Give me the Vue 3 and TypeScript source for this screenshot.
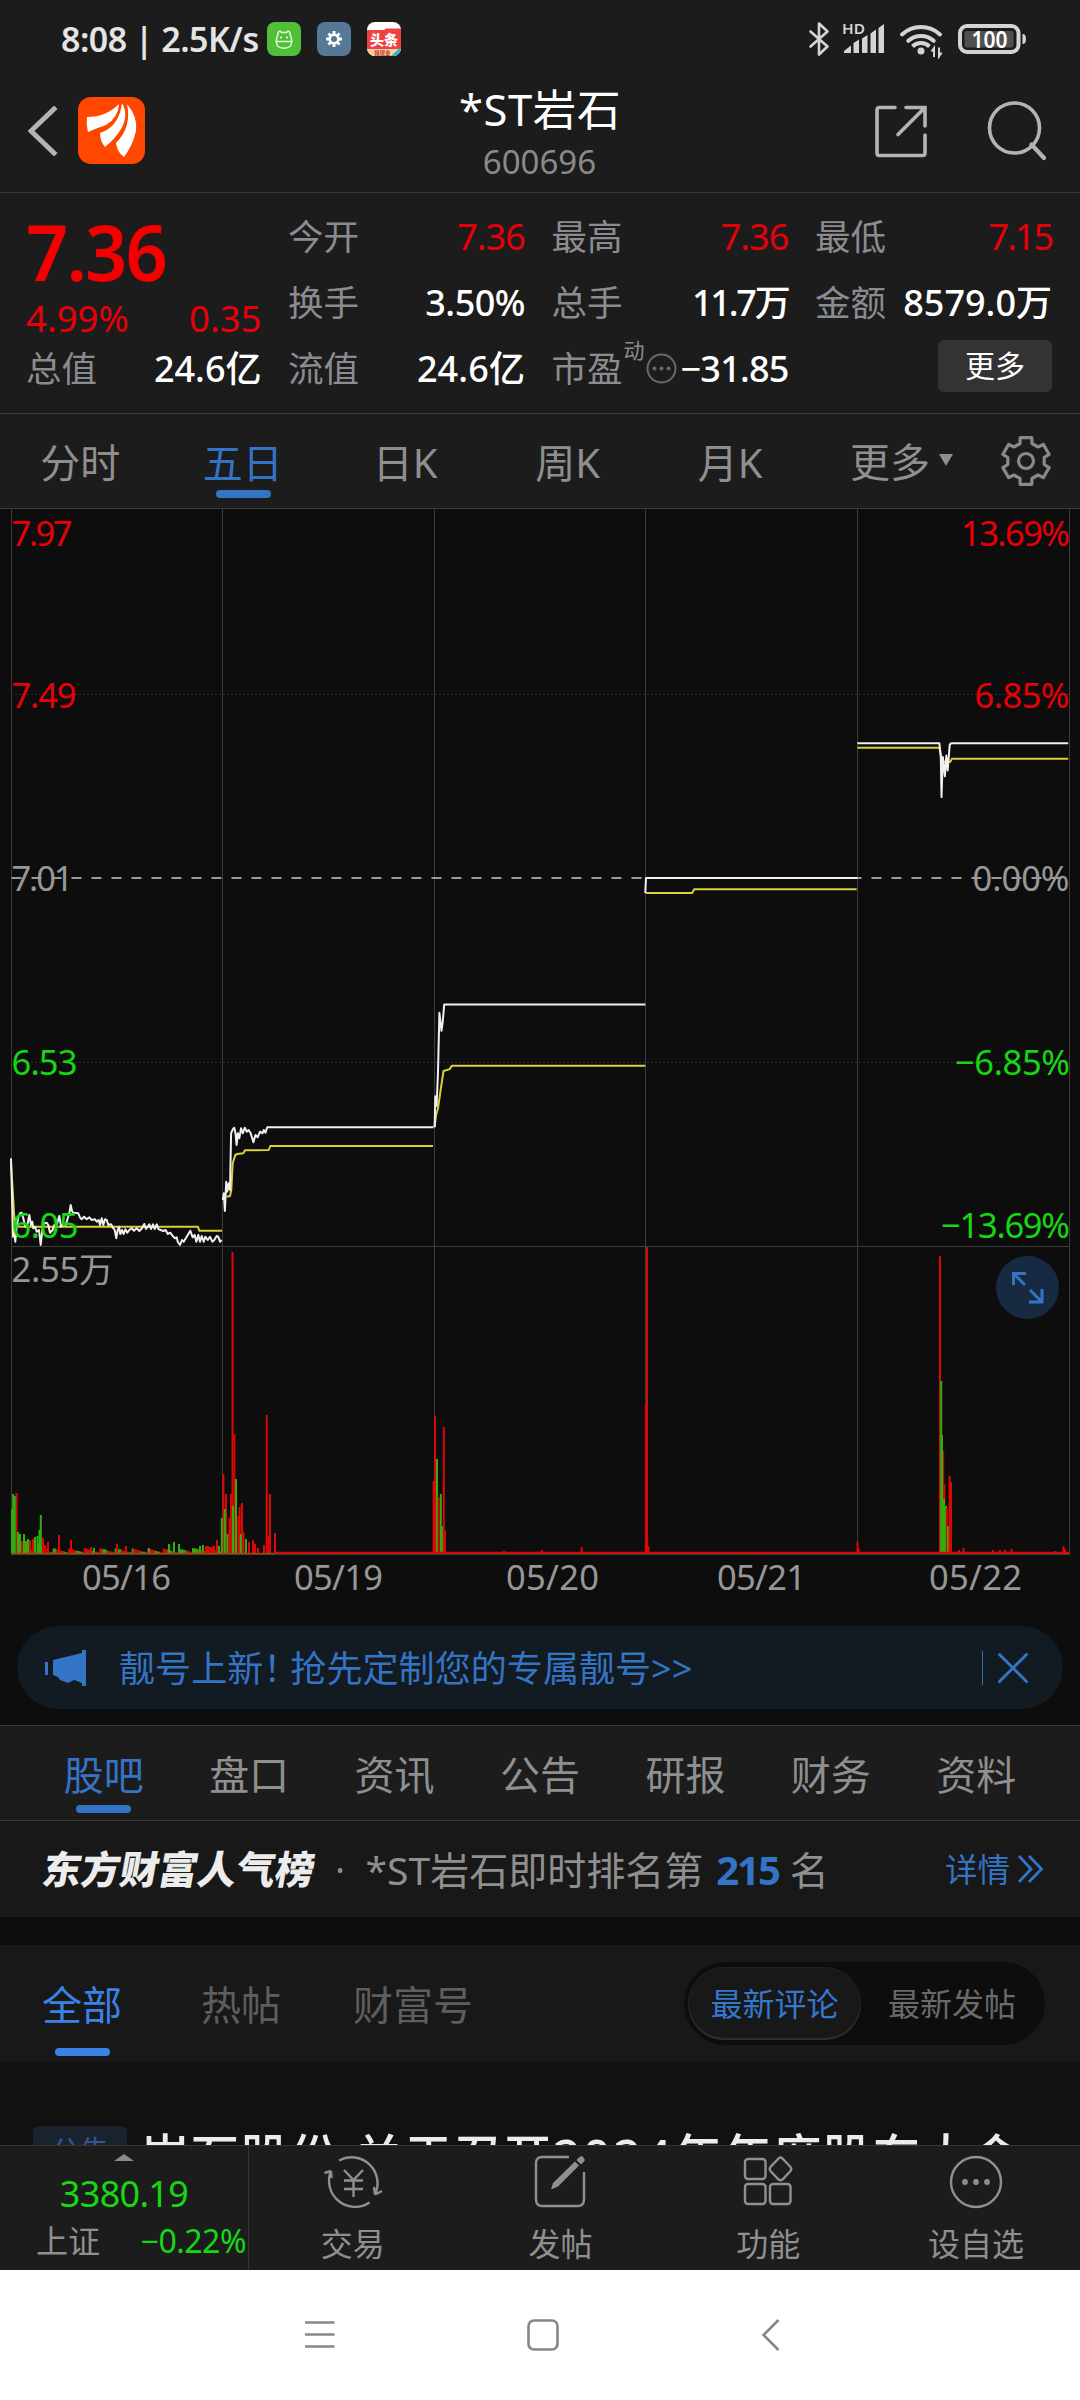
<script setup lang="ts">
interface Cell { label: string; value: string; tone?: 'up' | 'plain'; tracking?: number }
interface Segment { sx: number; sy: number; oy: number; samples: number[] }
type Bar = [x: number, height: number, tone: 'r' | 'g']

const columns: Cell[][] = [
  [
    { label: '今开', value: '7.36', tone: 'up', tracking: -0.9 },
    { label: '换手', value: '3.50%', tracking: -0.5 },
    { label: '流值', value: '24.6亿', tracking: 0.1 },
  ],
  [
    { label: '最高', value: '7.36', tone: 'up', tracking: -0.9 },
    { label: '总手', value: '11.7万', tracking: -2.2 },
    { label: '市盈', value: '−31.85', tracking: -0.8 },
  ],
  [
    { label: '最低', value: '7.15', tone: 'up', tracking: -2 },
    { label: '金额', value: '8579.0万', tracking: 0 },
  ],
]

const periods = ['分时', '五日', '日K', '周K', '月K']
const sections = ['股吧', '盘口', '资讯', '公告', '研报', '财务', '资料']

// Six-tooth gear outline
const gear = (() => {
  const out: string[] = []
  for (let k = 0; k < 6; k++) {
    const base = k * 60 - 90
    for (const [offset, r] of [[-19, 18.5], [-14, 24], [14, 24], [19, 18.5]]) {
      const a = ((base + offset) * Math.PI) / 180
      out.push(`${(26 + r * Math.cos(a)).toFixed(1)},${(26 + r * Math.sin(a)).toFixed(1)}`)
    }
  }
  return out.join(' ')
})()

const cog = (() => {
  const out: string[] = []
  for (let k = 0; k < 8; k++) {
    const base = k * 45
    for (const [offset, r] of [[-14, 5.6], [-11, 8], [11, 8], [14, 5.6]]) {
      const a = ((base + offset) * Math.PI) / 180
      out.push(`${(17 + r * Math.cos(a)).toFixed(1)},${(17 + r * Math.sin(a)).toFixed(1)}`)
    }
  }
  return out.join(' ')
})()

const line = ({ sx, sy, oy, samples }: Segment): string => {
  const out: string[] = []
  for (let i = 0; i < samples.length; i += 2) {
    out.push(`${(samples[i] / sx).toFixed(1)},${(oy + samples[i + 1] / sy).toFixed(1)}`)
  }
  return out.join(' ')
}

const priceLines = [
  { sx: 3, sy: 3, oy: 1130, samples: [33,85,36,200,39,320,42,300,46,335,50,290,55,262,60,250,65,248,70,265,76,290,82,285,88,255,93,285,97,275,100,295,105,290,110,305,117,300,122,345,128,290,133,280,140,278,145,285,150,308,158,300,163,285,170,285,178,258,183,290,190,280,197,285,203,265,208,250,212,225,216,243,220,248,235,250,240,262,245,268,252,260,260,268,268,262,275,270,285,268,290,275,296,270,300,285,305,265,310,285,315,268,320,270,325,285,333,283,338,292,344,300,349,325,353,300,357,290,361,312,366,300,371,312,376,298,382,308,388,300,395,295,402,302,410,295,418,303,426,295,433,282,438,297,443,290,448,283,453,297,459,283,464,297,470,283,475,297,482,300,490,303,497,300,503,312,511,308,518,318,525,325,530,322,533,335,540,345,546,330,551,335,560,320,571,302,578,322,584,315,589,335,595,315,600,335,605,318,611,335,616,320,623,330,630,320,637,335,643,330,650,318,655,320,660,335,665,330] },
  { sx: 2.904, sy: 3, oy: 1100, samples: [647,300,650,280,653,333,657,245,660,275,664,250,668,270,671,100,675,90,680,83,684,100,687,135,691,100,695,115,700,85,705,100,711,83,717,95,722,90,728,100,736,127,742,105,748,112,755,95,762,100,766,90,771,98,776,82,1259,82] },
  { sx: 1.452, sy: 2.063, oy: 500, samples: [631,1294,632,1230,634,1250,636,1180,638,1058,641,1095,643,1075,645,1041,937,1041] },
  { sx: 1.452, sy: 2.063, oy: 500, samples: [937,811,938,780,1245,780] },
  { sx: 1.452, sy: 2.063, oy: 500, samples: [1245,502,1364,502,1366,530,1367,613,1369,530,1372,570,1374,527,1376,558,1379,505,1381,502,1551,502] },
].map(line)

const averageLines = [
  { sx: 3, sy: 3, oy: 1130, samples: [33,100,38,180,42,250,46,285,60,290,594,290,598,302,666,302] },
  { sx: 3, sy: 3, oy: 1130, samples: [680,200,690,198,694,180,698,100,706,75,712,72,730,70,735,61,806,60,811,48,1299,48] },
  { sx: 1.452, sy: 2.063, oy: 500, samples: [631,1294,633,1270,636,1255,640,1215,644,1178,653,1174,656,1167,937,1167] },
  { sx: 1.452, sy: 2.063, oy: 500, samples: [938,811,1005,811,1008,803,1244,803] },
  { sx: 1.452, sy: 2.063, oy: 500, samples: [1245,511,1364,511,1368,540,1380,540,1382,534,1551,534] },
].map(line)

const spikes: Bar[] = [
  [12, 45, 'g'], [16.5, 61, 'r'], [13.2, 60, 'g'], [14.8, 58, 'g'], [18, 22, 'g'], [20, 20, 'g'], [22, 13, 'r'], [24, 20, 'g'], [26, 13, 'g'], [28, 15, 'g'],
  [30, 14, 'r'], [33, 15, 'r'], [35, 17, 'g'], [37.5, 18, 'g'], [39.5, 24, 'g'], [40.8, 39, 'g'], [43, 16, 'r'], [45, 9, 'r'], [48, 12, 'r'], [59, 19, 'r'], [71, 14, 'r'],
  [91, 7, 'r'], [94, 6, 'g'], [117, 10, 'r'], [126, 8, 'r'], [149, 6, 'g'], [169, 10, 'g'], [174, 12, 'g'], [179, 10, 'g'], [193, 6, 'g'], [200, 8, 'g'], [203, 9, 'g'],
  [206, 8, 'r'], [208, 8, 'r'], [210, 7, 'r'], [212, 7, 'r'], [214, 8, 'r'], [217, 14, 'r'], [219, 8, 'g'],
  [223.4, 80, 'r'], [226, 60, 'r'], [221.8, 36, 'g'], [224.8, 45, 'g'], [227.6, 20, 'g'], [229.5, 36, 'r'], [231, 60, 'r'], [232.5, 302, 'r'], [234.4, 120, 'r'], [236, 75, 'g'],
  [233, 48, 'g'], [238.3, 38, 'r'], [239.6, 47, 'r'], [242, 51, 'r'], [243.5, 22, 'r'], [240.8, 20, 'g'], [246, 15, 'g'], [249, 12, 'r'], [253, 14, 'r'], [255, 10, 'r'], [258, 6, 'r'],
  [264, 9, 'r'], [266.7, 139, 'r'], [268.2, 18, 'r'], [270, 60, 'r'], [275, 21, 'r'],
  [433.6, 73, 'r'], [435, 138, 'r'], [437, 95, 'g'], [438.5, 57, 'r'], [440.8, 60, 'g'], [442, 28, 'g'], [443.8, 127, 'r'], [445, 23, 'r'], [504, 3, 'r'], [542, 4, 'r'], [581.7, 7, 'r'],
  [645.8, 150, 'r'], [647, 307, 'r'], [648.5, 8, 'r'], [857.5, 12, 'r'], [858.5, 6, 'r'],
  [940, 298, 'r'], [941.2, 173, 'g'], [943.2, 103, 'r'], [942, 119, 'g'], [944.4, 70, 'r'], [944, 55, 'g'], [946, 48, 'g'], [946.8, 46, 'r'], [948, 28, 'g'], [949.6, 78, 'r'], [951, 72, 'r'],
  [959, 4, 'r'], [963.5, 6, 'r'], [993, 4, 'r'], [1000, 4, 'r'], [1005, 4, 'r'], [1011.5, 5, 'r'], [1055, 3, 'r'], [1063.5, 8, 'r'], [1065, 5, 'r'],
]

// Low-volume minutes of the first session
const floor: Bar[] = Array.from({ length: 132 }, (_, i) => {
  const n = (i * 7919 + 37) % 101
  return [18 + i * 1.55, 1.5 + (n % 6) * (i < 20 ? 1.6 : 0.8), n % 5 < 2 ? 'g' : 'r'] as Bar
})
const bars: Bar[] = [...floor, ...spikes]

const dates = [
  { x: 82, w: 89, text: '05/16' }, { x: 294, w: 89, text: '05/19' }, { x: 506, w: 93, text: '05/20' }, { x: 717, w: 89, text: '05/21' }, { x: 929, w: 93, text: '05/22' },
]
</script>

<template>
  <div class="screen">
    <div class="status">
      <span class="clock">8:08 | 2.5K/s</span>
      <svg class="app-icon" width="34" height="34" viewBox="0 0 34 34">
        <rect width="34" height="34" rx="8" fill="#4fc038" />
        <path d="M9.500 21v-3c0-2 .500-4 1.500-5-1-3 1.500-5 3.500-2.500h5c2-2.500 4.500-.500 3.500 2.500 1 1 1.500 3 1.500 5v3c-.500 7-14.500 7-15 0zM8.500 19.500h17" fill="none" stroke="#e8ffe0" stroke-width="1.400" />
        <circle cx="14" cy="15.500" r="1" fill="#fff" /><circle cx="20" cy="15.500" r="1" fill="#fff" />
      </svg>
      <svg class="app-icon" width="34" height="34" viewBox="0 0 34 34">
        <rect width="34" height="34" rx="8" fill="#547896" />
        <polygon :points="cog" fill="#fff" />
        <circle cx="17" cy="17" r="3" fill="#547896" />
      </svg>
      <svg class="app-icon" width="34" height="34" viewBox="0 0 34 34">
        <defs><clipPath id="tt"><rect width="34" height="34" rx="8" /></clipPath></defs>
        <g clip-path="url(#tt)">
          <rect width="34" height="34" fill="#fff" />
          <path d="M0 8h17l2-1.500h15V28H0z" fill="#f04142" />
          <rect y="27" width="34" height="7" fill="#f8cf9a" />
          <path d="M34 25v9H24z" fill="#19b9d4" />
          <text x="3" y="23" font-size="14" class="tt-text">头条</text>
          <text x="7" y="32.800" font-size="5.500" class="tt-sub">领现金</text>
        </g>
      </svg>
      <div class="grow"></div>
      <svg class="radios" width="222" height="40" viewBox="806 19 222 40">
        <path d="M809.500 31.500L826.500 46.500L818 54.500V23.500L826.500 31.500L809.500 46.500" fill="none" stroke="#d4d4d4" stroke-width="2.600" stroke-linejoin="round" stroke-linecap="round" />
        <text x="841" y="34" font-size="14.500" textLength="23" lengthAdjust="spacingAndGlyphs" class="hd">HD</text>
        <g fill="#d4d4d4">
          <path d="M843 53V51l7-5.500V53zM852.500 53V43l5.500-3.500V53zM861 53V38.500l5.500-3.500V53zM869.500 53V33.500l5.500-4V53zM877.500 53V28l5.500-4V53z" />
        </g>
        <g fill="none" stroke="#d4d4d4" stroke-width="4" stroke-linecap="round">
          <path d="M901 34.500a28 28 0 0 1 38 0M907.300 40.800a19 19 0 0 1 25.400 0" />
        </g>
        <path d="M911.500 46.500a12 12 0 0 1 17 0" fill="none" stroke="#d4d4d4" stroke-width="4" />
        <circle cx="920" cy="51" r="3.500" fill="#d4d4d4" />
        <path d="M933 57V48l-2.500 3.500M938 47.500V56.500l2.500-4" stroke="#d4d4d4" stroke-width="2" fill="none" />
        <rect x="959" y="26" width="58.500" height="26" rx="7" fill="none" stroke="#d4d4d4" stroke-width="4" />
        <rect x="963.500" y="31" width="49" height="16.500" rx="2" fill="#505050" />
        <path d="M1021.500 34v10q3.500 0 3.500-5t-3.500-5z" fill="#d4d4d4" />
        <text x="970.500" y="47.700" font-size="23" textLength="36" lengthAdjust="spacingAndGlyphs" class="level">100</text>
      </svg>
    </div>

    <header class="head">
      <div class="head-side">
        <svg width="30" height="50" viewBox="0 0 30 50"><path d="M26 3L3 25L26 47" fill="none" stroke="#b4b4b4" stroke-width="5" stroke-linecap="square" stroke-linejoin="miter" /></svg>
        <svg class="brand" width="67" height="67" viewBox="0 0 67 67">
          <rect width="67" height="67" rx="13" fill="#ff4700" />
          <path d="M9 20Q28 20 41 7Q40 21 28 28Q19 31 10 35Q8 28 9 20ZM22 36Q41 30 44 6Q51 18 43 32Q37 42 27 50Q22 44 22 36ZM49 7Q60 20 58 34Q55 48 46 60Q39 55 38 46Q54 30 49 7Z" fill="#fff" />
        </svg>
      </div>
      <div class="head-title">
        <h1>*ST岩石</h1>
        <p>600696</p>
      </div>
      <div class="head-side end">
        <svg width="54" height="54" viewBox="0 0 54 54"><path d="M21 3.500H5.500Q3 3.500 3 6V49Q3 51.500 5.500 51.500H48.500Q51 51.500 51 49V31M32 3.500H51V22M50 4.500L24 30.500" fill="none" stroke="#b4b4b4" stroke-width="3.600" stroke-linecap="round" /></svg>
        <svg width="60" height="60" viewBox="0 0 60 60"><circle cx="28.500" cy="27" r="25" fill="none" stroke="#b4b4b4" stroke-width="3.600" /><path d="M45.500 43.500L58 57" stroke="#b4b4b4" stroke-width="4.200" stroke-linecap="round" /></svg>
      </div>
    </header>

    <section class="quote">
      <div class="qcol">
        <div class="price">7.36</div>
        <div class="delta"><span>4.99%</span><span>0.35</span></div>
        <div class="qrow"><label>总值</label><b>24.6亿</b></div>
      </div>
      <div v-for="(col, c) in columns" :key="c" class="qcol">
        <div v-for="cell in col" :key="cell.label" class="qrow">
          <label>{{ cell.label }}<template v-if="cell.label === '市盈'"><sup>动</sup><svg width="31" height="31" viewBox="0 0 31 31"><circle cx="15.500" cy="15.500" r="14" fill="none" stroke="#6a6a6a" stroke-width="2" /><g fill="#6a6a6a"><circle cx="8.500" cy="15.500" r="2" /><circle cx="15.500" cy="15.500" r="2" /><circle cx="22.500" cy="15.500" r="2" /></g></svg></template></label>
          <b :class="cell.tone" :style="{ letterSpacing: `${cell.tracking ?? 0}px` }">{{ cell.value }}</b>
        </div>
        <div v-if="c === 2" class="qrow right"><button>更多</button></div>
      </div>
    </section>

    <nav class="periods">
      <div v-for="p in periods" :key="p" class="period" :class="{ on: p === '五日' }">{{ p }}</div>
      <div class="period more">更多<i></i></div>
      <svg width="52" height="52" viewBox="0 0 52 52"><polygon :points="gear" fill="none" stroke="#8a8a8a" stroke-width="3.200" stroke-linejoin="round" /><circle cx="26" cy="26" r="7.500" fill="none" stroke="#8a8a8a" stroke-width="3.200" /></svg>
    </nav>

    <div class="chart">
      <svg width="1080" height="1092" viewBox="0 508 1080 1092">
        <g stroke="#3c3c3c" stroke-width="1">
          <path d="M0 508.500H1080M11.500 508V1554M222.500 508V1554M434.500 508V1554M645.500 508V1554M857.500 508V1554M1069.500 508V1554M11 1246.500H1070M11 1554.500H1070" />
          <path d="M11 694.500H1070M11 1062.500H1070" stroke="#2a2a2a" stroke-dasharray="2 2" />
        </g>
        <g font-size="34.500">
          <g class="rise">
            <text x="11.500" y="545.500" textLength="61">7.97</text>
            <text x="11.500" y="707.500" textLength="65">7.49</text>
            <text x="961" y="545.500" textLength="109">13.69%</text>
            <text x="974.500" y="707.500" textLength="95">6.85%</text>
          </g>
          <g class="flat">
            <text x="11.500" y="891" textLength="62">7.01</text>
            <text x="972.500" y="891" textLength="97">0.00%</text>
            <text x="11.500" y="1281.500" textLength="102">2.55万</text>
            <text v-for="d in dates" :key="d.text" :x="d.x" y="1589.500" :textLength="d.w">{{ d.text }}</text>
          </g>
        </g>
        <path d="M11.500 878H1069" stroke="#9a9a9a" stroke-width="2" stroke-dasharray="10 10" />
        <g fill="none" stroke="#dccf3c" stroke-width="2" stroke-linejoin="round">
          <polyline v-for="(p, i) in averageLines" :key="i" :points="p" />
        </g>
        <g fill="none" stroke="#f0f0f0" stroke-width="2" stroke-linejoin="round">
          <polyline v-for="(p, i) in priceLines" :key="i" :points="p" />
        </g>
        <g class="fall" font-size="34.500">
          <text x="11.500" y="1075" textLength="66">6.53</text>
          <text x="11.500" y="1237.500" textLength="67">6.05</text>
          <text x="955" y="1075" textLength="115">−6.85%</text>
          <text x="941" y="1237.500" textLength="129">−13.69%</text>
        </g>
        <rect v-for="(b, i) in bars" :key="i" :x="b[0] - 1" :y="1554 - b[1]" width="2" :height="b[1]" :fill="b[2] === 'r' ? '#dc0808' : '#2fae10'" />
        <path d="M275 1552.800H1069" stroke="#d80a0a" stroke-width="2.200" />
        <path d="M11 1553.500H275" stroke="#9a4a0c" stroke-width="1.500" />
        <circle cx="1027.500" cy="1287.500" r="31.500" fill="#182a42" />
        <path d="M1013.500 1285V1273.500H1026M1013.500 1273.500L1025 1285M1042 1289V1302H1029M1042 1302L1030 1290" fill="none" stroke="#3474c4" stroke-width="3" />
      </svg>
    </div>

    <div class="banner">
      <svg width="41" height="36" viewBox="0 0 41 36"><path d="M0 12H3V25H0ZM8 10L37 3V0H41V36H37V33L29 30L23 33L15 30L13 27L8 25Z" fill="#3474c4" /></svg>
      <span class="banner-text">靓号上新<em>！</em>抢先定制您的专属靓号&gt;&gt;</span>
      <i class="divider"></i>
      <svg width="32" height="32" viewBox="0 0 32 32"><path d="M2.500 2.500L29.500 29.500M29.500 2.500L2.500 29.500" stroke="#3474c4" stroke-width="3" stroke-linecap="round" /></svg>
    </div>

    <nav class="sections">
      <div v-for="s in sections" :key="s" class="section" :class="{ on: s === '股吧' }">{{ s }}</div>
    </nav>

    <div class="rank">
      <strong>东方财富人气榜</strong>
      <span class="dot">·</span>
      <span class="rank-text">*ST岩石即时排名第</span>
      <b>215</b>
      <span class="rank-text">名</span>
      <div class="grow"></div>
      <span class="detail">详情</span>
      <svg width="27" height="30" viewBox="0 0 27 30"><path d="M2 2L14 15L2 28M12 2L24.500 15L12 28" fill="none" stroke="#3474c4" stroke-width="2.800" /></svg>
    </div>

    <nav class="posts">
      <div class="post on">全部</div>
      <div class="post">热帖</div>
      <div class="post">财富号</div>
      <div class="grow"></div>
      <div class="toggle"><span class="pill">最新评论</span><span>最新发帖</span></div>
    </nav>

    <div class="feed">
      <span class="badge">公告</span>
      <span class="headline">岩石股份<u>:</u>关于召开<s>2024</s>年年度股东大会</span>
    </div>

    <footer class="bar">
      <div class="index">
        <i></i>
        <div class="index-value">3380.19</div>
        <div class="index-row"><span>上证</span><b>−0.22%</b></div>
      </div>
      <div class="action">
        <svg width="62" height="56" viewBox="0 0 62 56"><path d="M17 6.500A26 26 0 0 1 53 40.500M53 40.500L52 33M53 40.500L60 37M47.500 48.500A26 26 0 0 1 9 17M9 17L2.500 19M9 17L9.500 24M22 16L31.500 26L41 16M31.500 26V43M22 26.500H41M22 35H41" fill="none" stroke="#909090" stroke-width="2.400" /></svg>
        <span>交易</span>
      </div>
      <div class="action">
        <svg width="56" height="56" viewBox="0 0 56 56"><path d="M36 3H9Q3 3 3 9V45Q3 52 9 52H45Q51 52 51 45V18" fill="none" stroke="#909090" stroke-width="2.400" /><path d="M18 35.500L20 29L42 7.500L46 11.500L25 32.500ZM43.500 6L46.500 3Q48.500 1.500 50.500 3.500T51 7.500L48 10.500Z" fill="#909090" /></svg>
        <span>发帖</span>
      </div>
      <div class="action">
        <svg width="56" height="56" viewBox="0 0 56 56"><g fill="none" stroke="#909090" stroke-width="2.400"><rect x="5" y="5" width="20.500" height="20" rx="3" /><rect x="5" y="30" width="20.500" height="20" rx="3" /><rect x="30" y="30" width="20.500" height="20" rx="3" /><path d="M38.500 4.500Q40.500 2.500 42.500 4.500L50.500 13Q52 15 50.500 17L42.500 25.500Q40.500 27 38.500 25.500L30.500 17Q29 15 30.500 13Z" /></g></svg>
        <span>功能</span>
      </div>
      <div class="action">
        <svg width="56" height="56" viewBox="0 0 56 56"><circle cx="28" cy="28" r="25" fill="none" stroke="#909090" stroke-width="2.400" /><g fill="#909090"><circle cx="17" cy="28" r="2.900" /><circle cx="28" cy="28" r="2.900" /><circle cx="39" cy="28" r="2.900" /></g></svg>
        <span>设自选</span>
      </div>
    </footer>

    <div class="system">
      <svg width="30" height="32" viewBox="0 0 30 32"><path d="M0 4.500H29.500M0 16.500H29.500M0 28.500H29.500" stroke="#868686" stroke-width="2.600" /></svg>
      <svg width="32" height="34" viewBox="0 0 32 34"><rect x="1.500" y="2.500" width="29" height="29" rx="5.500" fill="none" stroke="#868686" stroke-width="2.600" /></svg>
      <svg width="20" height="34" viewBox="0 0 20 34"><path d="M17.500 2L2.500 17L17.500 32" fill="none" stroke="#868686" stroke-width="2.600" /></svg>
    </div>
  </div>
</template>

<style>
body { margin: 0; background: #0d0d0d; }
</style>

<style scoped>
.screen {
  width: 1080px; height: 2400px; overflow: hidden; background: #0d0d0d; color: #8f8f8f;
  font-family: "Noto Sans", "Noto Sans CJK SC", sans-serif; display: flex; flex-direction: column;
}
.screen > * { flex: none; box-sizing: border-box; }
svg { display: block; flex: none; }
.grow { flex: 1; }
.status { height: 78px; background: #1c1c1c; display: flex; align-items: center; padding: 0 51px 0 61px; }
.clock { font-size: 34px; font-weight: 600; color: #e4e4e4; line-height: 78px; width: 206px; white-space: nowrap; letter-spacing: -0.55px; }
.app-icon { margin-right: 16px; }
.tt-text { fill: #fff; font-weight: 900; font-family: "Noto Sans CJK SC", sans-serif; }
.tt-sub { fill: #c03030; font-weight: 700; }
.hd, .level { fill: #d4d4d4; font-weight: 600; }
.level { fill: #fff; }
.head { height: 115px; background: #1c1c1c; border-bottom: 1px solid #363636; display: flex; justify-content: space-between; padding: 0 34px 0 28px; }
.head-side { width: 180px; display: flex; align-items: center; height: 105px; }
.brand { margin-left: 20px; }
.head-side.end { justify-content: flex-end; gap: 58px; width: 180px; }
.head-title { text-align: center; }
h1 { margin: 8px 0 0; font-size: 43.5px; line-height: 44px; font-weight: 400; color: #fff; padding: 1px 0 0 6px; letter-spacing: 0.6px; }
p { margin: 6px 0 0; font-size: 33px; line-height: 50px; color: #8a8a8a; padding-left: 5px; }
.quote { height: 221px; background: #1c1c1c; border-bottom: 1px solid #3a3a3a; display: grid; grid-template-columns: repeat(4, 1fr); column-gap: 28px; padding: 10.5px 28px 0 26px; }
.qrow { height: 66px; display: flex; align-items: center; justify-content: space-between; font-size: 35.5px; line-height: 67px; white-space: nowrap; }
.qrow label { display: flex; align-items: center; color: #8c8c90; }
.qcol + .qcol label { margin-left: -1.5px; }
.qrow sup { font-size: 21px; line-height: 22px; align-self: flex-start; margin: 4px 0 0 1px; }
.qrow label svg { margin-left: 1px; }
.qrow b { font-weight: 500; color: #fff; font-size: 36px; }
.qrow b.up { color: #e80008; font-weight: 400; }
.qrow.right { justify-content: flex-end; }
button { width: 114px; height: 52px; margin-top: -5px; border: 0; border-radius: 6px; background: #333; color: #fff; font: 400 30px/50px "Noto Sans", "Noto Sans CJK SC", sans-serif; padding: 0; }
.price { height: 96px; line-height: 95px; font-size: 78px; font-weight: 600; color: #f50000; letter-spacing: -2px; transform: scaleX(0.95); transform-origin: 0 50%; }
.delta { height: 36px; display: flex; justify-content: space-between; align-items: center; font-size: 36.500px; line-height: 38px; color: #e80008; }
.periods { height: 94px; background: #1c1c1c; display: flex; align-items: center; }
.period { width: 162.5px; text-align: center; font-size: 40px; line-height: 94px; padding: 2px 2px 0 0; height: 94px; box-sizing: border-box; position: relative; }
.on { color: #3474c4; }
.on::after { content: ""; position: absolute; left: 50%; margin-left: -27.5px; width: 55px; height: 8px; border-radius: 4px; background: #3474c4; }
.period.on::after { top: 76px; }
.period.more { width: 187px; display: flex; align-items: center; justify-content: center; padding-right: 9px; }
.more i { border: 7px solid transparent; border-top: 12px solid #909090; border-bottom: 0; margin: -4px 0 0 9px; }
.chart { height: 1092px; }
.chart text { white-space: pre; }
.rise { fill: #e80008; } .fall { fill: #16d616; } .flat { fill: #979797; }
.banner { margin: 26px 17px 16px; height: 83px; border-radius: 42px; background: #121a22; display: flex; align-items: center; padding: 0 34px 0 28px; color: #3474c4; }
.banner-text { margin-left: 33px; font-size: 36.1px; line-height: 84px; flex: 1; white-space: nowrap; }
em { font-style: normal; display: inline-block; width: 27px; }
.divider { width: 1px; height: 34px; background: #3a6aa8; margin-right: 14px; }
.sections { height: 96px; background: #1c1c1c; border-top: 1px solid #3a3a3a; border-bottom: 1px solid #3a3a3a; display: flex; padding: 0 31px; }
.section { flex: 1; text-align: center; font-size: 40px; line-height: 97px; height: 94px; position: relative; }
.section.on::after { top: 79px; }
.rank { height: 96px; background: #181818; display: flex; align-items: center; padding: 0 36px 0 43px; white-space: nowrap; line-height: 97px; }
.rank strong { font-size: 38.800px; font-weight: 900; color: #ececec; transform: skewX(-10deg); }
.dot { width: 51px; text-align: center; font-size: 36px; }
.rank-text { font-size: 39px; }
.rank b { font-size: 40px; font-weight: 700; color: #3474c4; margin: 0 11px 0 13px; letter-spacing: -2px; }
.detail { color: #3474c4; font-size: 32.500px; margin-right: 7px; }
.posts { height: 117px; margin-top: 28px; background: #181818; display: flex; align-items: center; padding: 0 35px 0 42px; font-size: 40px; color: #5e5e5e; }
.post { position: relative; height: 117px; line-height: 119px; margin-right: 79px; }
.post + .post { margin-right: 72px; }
.post.on { color: #3a82e6; }
.post.on::after { top: 103px; background: #3a82e6; }
.toggle { height: 83px; width: 361px; border-radius: 42px; background: #0d0d0d; display: flex; align-items: center; font-size: 32px; line-height: 73px; box-sizing: border-box; padding-left: 4px; color: #6a6a6a; }
.toggle span { width: 173px; text-align: center; height: 73px; }
.toggle span + span { width: 182px; }
.toggle .pill { border-radius: 37px; background: #181818; box-shadow: inset 0 -2px 1px #303030, inset 0 0 1px 1px #202020; color: #3478cc; }
.feed { height: 83px; background: #111; overflow: hidden; display: flex; align-items: flex-start; padding: 64px 0 0 33px; white-space: nowrap; }
.badge { width: 94px; height: 50px; border-radius: 6px; background: #1a2230; color: #31558c; font-size: 29px; line-height: 49px; text-align: center; flex: none; }
.headline { font-size: 48.5px; font-weight: 500; color: #ececec; line-height: 60px; margin: 0 0 0 14px; letter-spacing: 1.1px; }
u { text-decoration: none; display: inline-block; width: 15px; }
s { text-decoration: none; letter-spacing: 2.5px; }
.bar { height: 125px; background: #1c1c1c; border-top: 1px solid #363636; display: flex; }
.index { width: 249px; border-right: 1px solid #363636; box-sizing: border-box; }
.index i { display: block; width: 0; border: 10px solid transparent; border-bottom: 7px solid #8a8a8a; border-top: 0; margin: 8px 0 0 114px; }
.index-value { font-size: 36px; line-height: 50px; margin-top: 8px; color: #16d616; text-align: center; letter-spacing: -0.7px; }
.index-row { display: flex; justify-content: space-between; font-size: 32px; line-height: 44px; padding: 0 2px 0 36px; }
.index-row b { font-weight: 400; color: #16d616; letter-spacing: -0.5px; }
.action { flex: 1; display: flex; flex-direction: column; align-items: center; padding: 8px 0 0 0; font-size: 32px; }
.action span { line-height: 43px; margin-top: 12px; }
.system { height: 130px; background: #fff; display: flex; padding: 48px 0 0 305px; }
.system svg + svg { margin-left: 192px; margin-top: 0; }
.system svg + svg + svg { margin-left: 202px; }
</style>
